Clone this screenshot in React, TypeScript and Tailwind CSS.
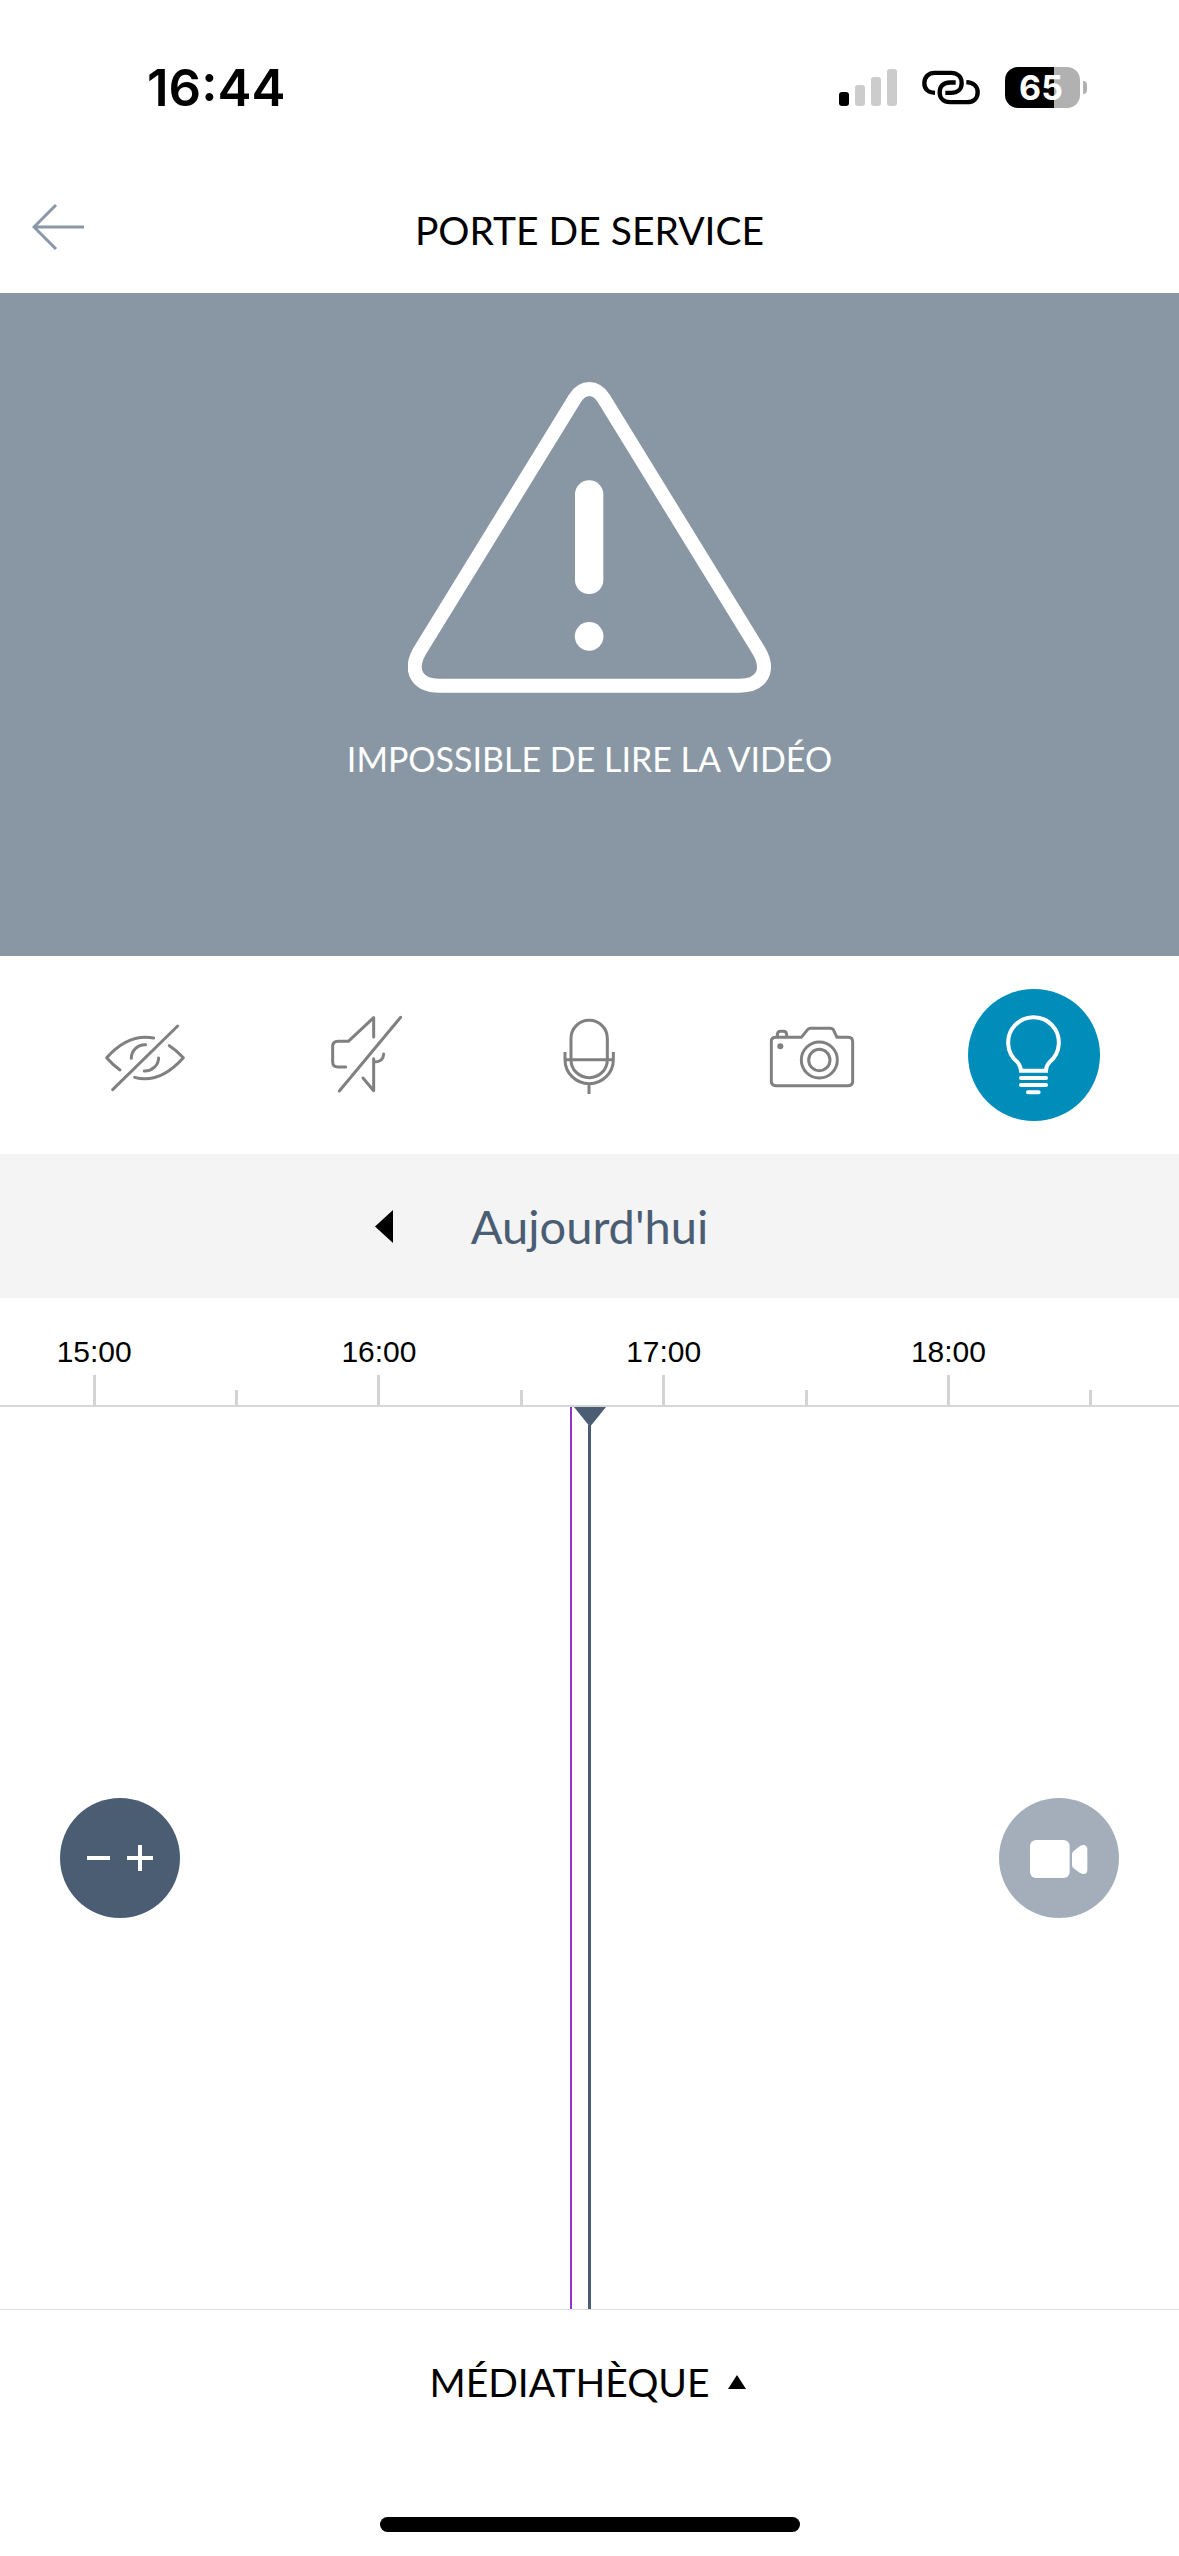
import type { ReactNode } from "react";
import clsx from "clsx";

const slots = [
  { label: "15:00", hour: true },
  { label: "15:30", hour: false },
  { label: "16:00", hour: true },
  { label: "16:30", hour: false },
  { label: "17:00", hour: true },
  { label: "17:30", hour: false },
  { label: "18:00", hour: true },
  { label: "18:30", hour: false },
];

const signal = [
  "h-[14px] bg-black",
  "h-[21px] bg-[#cccccc]",
  "h-[29px] bg-[#cccccc]",
  "h-[37px] bg-[#cccccc]",
];

function StatusBar() {
  return (
    <div className="flex h-40 items-center justify-between pt-[15px] pr-[92px] pl-[147px] font-['Inter',sans-serif]">
      <span className="text-[51px] leading-none font-semibold">16:44</span>
      <div className="flex items-center">
        <div className="flex items-end gap-[6px]">
          {signal.map((bar) => (
            <span key={bar} className={clsx("w-[10px] rounded-[3px]", bar)} />
          ))}
        </div>
        <svg viewBox="366 62 174 104" className="ml-[25px] h-[35px] w-[58px]" fill="none" stroke="#000" strokeWidth="13" strokeLinecap="butt">
          <path d="M405 130C384 129 373 118 373 101C373 82 386 70 404 70H453C472 70 485 82 485 101C485 120 472 130 453 130H436" />
          <path d="M499 98C520 99 533 110 533 128C533 147 520 158 501 158H450C431 158 419 147 419 128C419 109 432 99 450 99H467" />
        </svg>
        <div className="ml-[25px] flex h-[41px] w-[75px] items-center justify-center rounded-[13px] bg-linear-to-r from-black from-65% to-[#b1b1b1] to-65% pr-[3px]">
          <span className="text-[34px] leading-none font-bold text-white">65</span>
        </div>
        <span className="ml-[3px] h-[13px] w-1 rounded-r-full bg-[#b1b1b1]" />
      </div>
    </div>
  );
}

function Header() {
  return (
    <header className="grid h-[133px] grid-cols-[1fr_auto_1fr] items-center px-8">
      <button type="button" aria-label="Retour" className="justify-self-start">
        <svg viewBox="0 0 52 46" className="h-[46px] w-[52px]" fill="none" stroke="#8997a8" strokeWidth="3">
          <path d="M24 1L2 23L24 45M2 23H52" />
        </svg>
      </button>
      <h1 className="pt-[7px] text-[39px] leading-[48px]">PORTE DE SERVICE</h1>
    </header>
  );
}

function VideoError() {
  return (
    <section className="flex h-[663px] flex-col items-center bg-[#8997a4] pt-[89px] text-white">
      <svg viewBox="88 66 1087 933" className="h-[311px] w-[363px]" fill="none">
        <path
          d="M588 115C612 78 650 78 674 115L1140 873C1175 935 1145 977 1082 977H180C118 977 87 935 122 873Z"
          stroke="#fff"
          strokeWidth="42"
        />
        <rect x="588" y="361" width="85" height="341" rx="42" fill="#fff" />
        <circle cx="630.5" cy="829" r="43" fill="#fff" />
      </svg>
      <p className="mt-[45px] text-[34px] leading-[42px]">IMPOSSIBLE DE LIRE LA VIDÉO</p>
    </section>
  );
}

function ControlButton({
  label,
  viewBox,
  active = false,
  children,
}: {
  label: string;
  viewBox: string;
  active?: boolean;
  children: ReactNode;
}) {
  return (
    <button
      type="button"
      aria-label={label}
      className={clsx("size-[132px] rounded-full", active ? "bg-[#008dba] text-white" : "text-[#808080]")}
    >
      <svg
        viewBox={viewBox}
        className="size-full"
        fill="none"
        stroke="currentColor"
        strokeWidth={active ? 12 : 9}
        strokeLinejoin="round"
      >
        {children}
      </svg>
    </button>
  );
}

function Controls() {
  return (
    <div className="grid h-[198px] grid-cols-5 place-items-center px-[34px]">
      <ControlButton label="Masquer la vidéo" viewBox="-3 27 396 396">
        <g strokeLinecap="round">
          <path d="M120 270Q99 255 80 233C122 186 166 163 221 174" />
          <path d="M268 197Q291 212 310 233C268 280 220 308 164 292" />
          <path d="M154 235A41 41 0 0 1 197 194M236 234A41 41 0 0 1 193 273" />
          <path d="M98 329L293 138" />
        </g>
      </ControlButton>
      <ControlButton label="Couper le son" viewBox="663 27 396 396">
        <g strokeLinecap="round">
          <path d="M797 261H774Q758 261 758 246V200Q758 184 774 184H805L881 113V171" />
          <path d="M849 294L881 332V236M911 222Q910 246 883 246" />
          <path d="M778 333L962 112" />
        </g>
      </ControlButton>
      <ControlButton label="Micro" viewBox="-20 27 396 396">
        <rect x="124" y="121" width="109" height="172" rx="54" />
        <path d="M106 216V239A72.5 72 0 0 0 251 239V216M106 239H251M178 311V342" />
      </ControlButton>
      <ControlButton label="Photo" viewBox="648 27 396 396">
        <path d="M738 172H814L831 151Q835 145 841 145H900Q908 145 911 151L921 172H955Q968 172 968 186V304Q968 317 955 317H738Q724 317 724 304V184Q724 172 738 172Z" />
        <path d="M742 172V165Q742 154 752 154H760Q770 154 770 165V172" />
        <circle cx="868" cy="240" r="54" />
        <circle cx="868" cy="240" r="32" />
        <circle cx="751" cy="199" r="9" fill="currentColor" stroke="none" />
      </ControlButton>
      <ControlButton label="Éclairage" viewBox="84 87 396 396" active>
        <path strokeLinejoin="miter" d="M243 332Q242 318 232 306A76 76 0 1 1 329 306Q318 318 318 332Z" />
        <path strokeLinecap="round" d="M243 354H318M243 375H318M264 397H296" />
      </ControlButton>
    </div>
  );
}

function DayPicker() {
  return (
    <div className="grid h-36 grid-cols-[1fr_auto_1fr] items-center bg-[#f4f4f4]">
      <button type="button" aria-label="Jour précédent" className="mr-[78px] justify-self-end">
        <svg viewBox="0 0 18 33" className="h-[33px] w-[18px]">
          <path d="M18 0V33L0 16.5Z" />
        </svg>
      </button>
      <h2 className="text-[47px] leading-[56px] text-[#4a5d73]">Aujourd'hui</h2>
    </div>
  );
}

function Timeline() {
  return (
    <section className="flex flex-1 flex-col">
      <div className="grid h-[109px] grid-cols-8 border-b-2 border-[#d6d6d6] pr-[17px] pl-[23px]">
        {slots.map((slot) => (
          <div key={slot.label} className="flex flex-col items-center justify-end">
            {slot.hour && (
              <time className="mb-[6px] font-['Liberation_Sans',Arial,sans-serif] text-[30px] leading-[34px]">
                {slot.label}
              </time>
            )}
            <span className={clsx("w-[3px] bg-[#d3d3d3]", slot.hour ? "h-[30px]" : "h-[15px]")} />
          </div>
        ))}
      </div>
      <div className="relative flex flex-1 items-center justify-between px-[60px]">
        <div className="absolute inset-y-0 left-1/2 -ml-5 w-[2px] bg-[#9236c6]" />
        <div className="absolute inset-y-0 left-1/2 -ml-4 flex w-8 flex-col items-center">
          <svg viewBox="0 0 32 18" className="h-[18px] w-8 shrink-0" fill="#4a5d73">
            <path d="M0 0H32L17.500 18H14.500Z" />
          </svg>
          <span className="w-[3px] flex-1 bg-[#4a5d73]" />
        </div>
        <button type="button" aria-label="Zoom" className="size-[120px] rounded-full bg-[#4a5d73]">
          <svg viewBox="0 0 120 120" className="size-full" stroke="#fff" strokeWidth="4">
            <path d="M27 60H50M67 60H93M80 47V73" />
          </svg>
        </button>
        <button type="button" aria-label="Enregistrer" className="size-[120px] rounded-full bg-[#a4aebb]">
          <svg viewBox="57 54 360 360" className="size-full" fill="#fff">
            <rect x="150" y="180" width="119" height="114" rx="18" />
            <path d="M276 223Q276 217 281 213L300 198Q307 194 313 195Q322 198 322 208V269Q322 280 313 282Q307 283 300 279L281 265Q276 261 276 254Z" />
          </svg>
        </button>
      </div>
    </section>
  );
}

function Footer() {
  return (
    <footer className="flex h-[247px] flex-col items-center justify-between border-t border-[#dcdcdc] pb-6">
      <button type="button" className="flex h-[144px] items-center gap-[18px] pr-1 text-[39px] leading-[48px]">
        MÉDIATHÈQUE
        <svg viewBox="0 0 18 14" className="h-[14px] w-[18px]">
          <path d="M9 0L18 14H0Z" />
        </svg>
      </button>
      <div className="h-[15px] w-[420px] rounded-full bg-black" />
    </footer>
  );
}

export default function App() {
  return (
    <main className="flex min-h-screen flex-col bg-white font-['Lato',sans-serif] text-black">
      <StatusBar />
      <Header />
      <VideoError />
      <Controls />
      <DayPicker />
      <Timeline />
      <Footer />
    </main>
  );
}
